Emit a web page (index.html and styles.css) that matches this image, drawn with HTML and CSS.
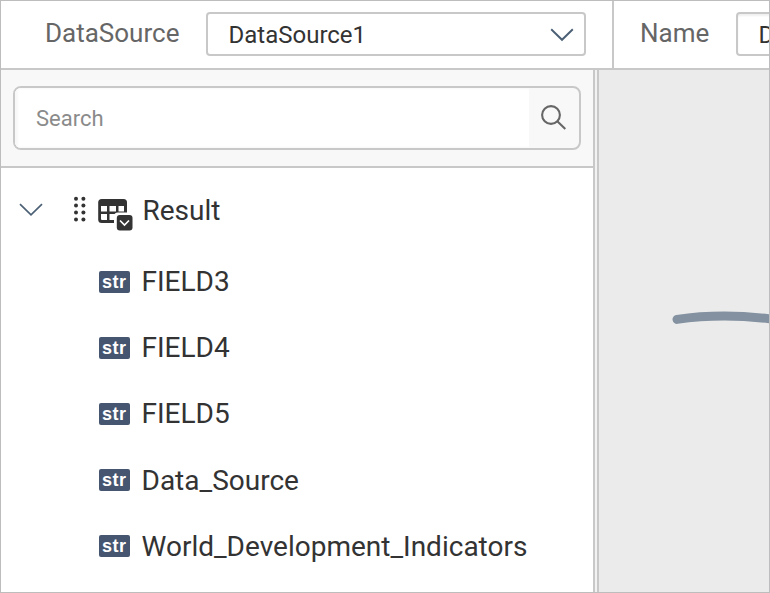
FILE: index.html
```html
<!DOCTYPE html>
<html lang="en">
<head>
<meta charset="utf-8">
<title>DataSource</title>
<link rel="stylesheet" href="styles.css">
</head>
<body>
<div class="app">
  <header class="topbar">
    <div class="source">
      <span class="label source-label">DataSource</span>
      <div class="select">
        <span class="value">DataSource1</span>
        <svg class="select-chevron" width="24" height="14" viewBox="0 0 24 14"><path d="M1.2 1.2L12 11.8L22.8 1.2"/></svg>
      </div>
    </div>
    <div class="name">
      <span class="label name-label">Name</span>
      <div class="name-input"><span class="value">D</span></div>
    </div>
  </header>
  <div class="body">
    <aside class="sidebar">
      <div class="search-area">
        <div class="search">
          <span class="search-field">Search</span>
          <span class="search-button">
            <svg width="28" height="28" viewBox="0 0 28 28"><circle cx="11" cy="11" r="8.9"/><path d="M17.3 17.3L25.3 25"/></svg>
          </span>
        </div>
      </div>
      <div class="tree">
        <div class="node">
          <svg class="node-chevron" width="24" height="14" viewBox="0 0 24 14"><path d="M1 1.2L12 11.8L23 1.2"/></svg>
          <svg class="grip" width="14" height="26" viewBox="0 0 14 26">
            <circle cx="3" cy="2.8" r="2"/><circle cx="10.4" cy="2.8" r="2"/>
            <circle cx="3" cy="9.6" r="2"/><circle cx="10.4" cy="9.6" r="2"/>
            <circle cx="3" cy="16.4" r="2"/><circle cx="10.4" cy="16.4" r="2"/>
            <circle cx="3" cy="23.4" r="2"/><circle cx="10.4" cy="23.4" r="2"/>
          </svg>
          <svg class="table-icon" width="36" height="34" viewBox="0 0 36 34">
            <rect x="0.2" y="1" width="28.8" height="24" rx="3.5" fill="#333"/>
            <path d="M3 8h6v5.5H3zM11.5 8h6.5v5.5h-6.5zM20.5 8H26v5.5h-5.5zM3 16h6v6H4a1 1 0 0 1-1-1zM11.5 16h6.5v6h-6.5z" fill="#fff"/>
            <path d="M16 26V18.5a4 4 0 0 1 4-4H30V26z" fill="#fff"/>
            <rect x="18.8" y="17" width="15.7" height="15.5" rx="3" fill="#333"/>
            <path d="M22 22.5L26.5 27L31 22.5" fill="none" stroke="#fff" stroke-width="1.7"/>
          </svg>
          <span class="text">Result</span>
        </div>
        <ul class="fields">
          <li><span class="type">str</span><span class="text">FIELD3</span></li>
          <li><span class="type">str</span><span class="text">FIELD4</span></li>
          <li><span class="type">str</span><span class="text">FIELD5</span></li>
          <li><span class="type">str</span><span class="text">Data_Source</span></li>
          <li><span class="type">str</span><span class="text">World_Development_Indicators</span></li>
        </ul>
      </div>
    </aside>
    <div class="splitter"></div>
    <main class="canvas">
      <svg class="stroke" width="110" height="20" viewBox="0 0 110 20"><path d="M6 11.4Q54 4.4 110 12.2"/></svg>
    </main>
  </div>
</div>
</body>
</html>
```
FILE: styles.css
```css
* { box-sizing: border-box; }
body { margin: 0; font-family: Roboto, sans-serif; color: #333; }
svg { display: block; flex: none; }
.app {
  width: 770px; height: 593px; overflow: hidden;
  display: flex; flex-direction: column;
  border: 1px solid #bdbdbd; background: #fff;
}
.topbar { display: flex; flex: none; height: 69px; border-bottom: 2px solid #c8c8c8; }
.source { display: flex; flex: none; width: 613px; padding: 11px 0 0 44px; border-right: 2px solid #c8c8c8; }
.label { flex: none; font-size: 26px; line-height: 43px; color: #666; white-space: nowrap; }
.source-label { width: 161px; }
.select {
  display: flex; justify-content: space-between; flex: none;
  width: 380px; height: 44px; padding: 0 10px 0 20.5px;
  border: 2px solid #c8c8c8; border-radius: 4px;
}
.value { font-size: 24px; line-height: 42px; white-space: nowrap; }
.select-chevron { margin-top: 14px; }
.select-chevron path, .node-chevron path { fill: none; stroke: #4b6075; stroke-width: 1.9; }
.name { display: flex; flex: 1; min-width: 0; padding: 11px 0 0 26px; overflow: hidden; }
.name-label { width: 96px; }
.name-input {
  flex: none; width: 380px; height: 44px; padding-left: 20.5px;
  border: 2px solid #c8c8c8; border-radius: 4px; box-shadow: inset 0 2px 2px #f0f0f0;
}
.body { display: flex; flex: 1; min-height: 0; }
.sidebar { flex: none; width: 592px; }
.search-area { height: 98px; padding: 16px 12px; background: #f8f8f8; border-bottom: 2px solid #c8c8c8; }
.search {
  display: flex; height: 64px; border: 2px solid #c8c8c8; border-radius: 8px;
  background: #f8f8f8; overflow: hidden;
}
.search-field {
  flex: 1; padding-left: 21px; font-size: 22px; line-height: 61px; color: #8b8b8b;
  background: #fff; box-shadow: inset 2px 0 2px 1px #f8f8f8;
}
.search-button { flex: none; width: 50px; padding: 16px 0 0 10.5px; }
.search-button svg { fill: none; stroke: #666; stroke-width: 2.1; }
.node { display: flex; height: 81px; padding: 22px 0 0 18px; }
.text { font-size: 28px; line-height: 42px; white-space: nowrap; }
.node-chevron { margin: 13px 30px 0 0; }
.node-chevron path { stroke-width: 1.7; }
.grip { margin: 6px 11px 0 0; fill: #333; }
.table-icon { margin: 8px 8.5px 0 0; }
.fields { margin: 0; padding: 0 0 0 98px; list-style: none; }
.fields li { display: flex; align-items: center; height: 66.2px; }
.type {
  flex: none; width: 30.5px; height: 22px; margin: 0 12px 1px 0; border-radius: 2px;
  background: #465670; color: #fff; text-align: center;
  font: bold 18px/22px "Liberation Sans", sans-serif; letter-spacing: .5px;
}
.splitter { flex: none; width: 6px; border: solid #c8c8c8; border-width: 0 2px; background: #f2f2f2; }
.canvas { flex: 1; min-width: 0; overflow: hidden; background: #ebebeb; padding: 238px 0 0 72px; }
.stroke { fill: none; stroke: #8391a0; stroke-width: 9; stroke-linecap: round; }
```
